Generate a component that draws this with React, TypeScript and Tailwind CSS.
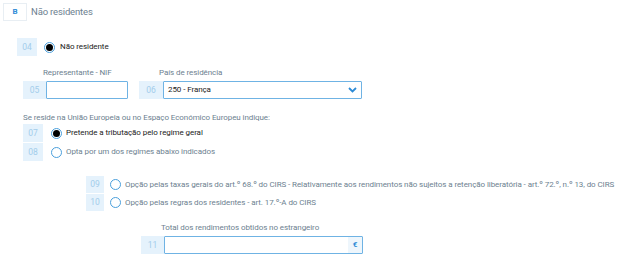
import React from "react";

const font = { fontFamily: "Roboto, 'Liberation Sans', sans-serif" };

function Num({ n, w = "w-[20px]", h = "h-[18px]" }: { n: string; w?: string; h?: string }) {
  return (
    <div className={`${w} ${h} shrink-0 bg-[#e5f2fc] text-[#a3cdeb] text-[8.5px] flex items-center justify-center`}>
      {n}
    </div>
  );
}

function Radio({ checked }: { checked?: boolean }) {
  return (
    <div className="w-[11px] h-[11px] rounded-full border border-[#4a9fdc] bg-white flex items-center justify-center shrink-0">
      {checked && <div className="w-[7px] h-[7px] rounded-full bg-black" />}
    </div>
  );
}

export default function App() {
  return (
    <div className="w-[623px] h-[257px] bg-white relative overflow-hidden tracking-[-0.08px]" style={font}>
      {/* header */}
      <div className="flex items-center pt-[3px] pl-[3px]">
        <div className="w-[24px] h-[18px] border border-[#e8eef3] flex items-center justify-center text-[8px] font-bold text-[#2d8bd6]">
          B
        </div>
        <div className="ml-[4px] text-[9.5px] text-[#6d7f90] tracking-[-0.15px]">Não residentes</div>
      </div>

      {/* 04 */}
      <div className="flex items-center mt-[17px] ml-[17px] h-[18px]">
        <Num n="04" />
        <div className="ml-[7px]"><Radio checked /></div>
        <div className="ml-[5px] text-[8px] text-[#222]">Não residente</div>
      </div>

      {/* 05 / 06 */}
      <div className="flex mt-[11px]">
        <div className="ml-[23px] flex flex-col">
          <div className="ml-[20px] text-[8px] text-[#6d7f90] h-[12px] leading-[12px]">Representante - NIF</div>
          <div className="flex mt-[2px]">
            <Num n="05" w="w-[23px]" />
            <div className="w-[82px] h-[18px] border border-[#6fb3e4] rounded-[1px] bg-white" />
          </div>
        </div>
        <div className="ml-[11px] flex flex-col">
          <div className="ml-[20px] text-[8px] text-[#6d7f90] h-[12px] leading-[12px]">País de residência</div>
          <div className="flex mt-[2px]">
            <Num n="06" w="w-[24px]" />
            <div className="w-[199px] h-[18px] border border-[#6fb3e4] rounded-[1px] bg-white flex items-center justify-between pl-[4px] pr-[4px]">
              <span className="text-[8px] text-[#222]">250 - França</span>
              <svg width="9" height="6" viewBox="0 0 9 6">
                <path d="M1 1 L4.5 4.5 L8 1" stroke="#2d8bd6" strokeWidth="1.8" fill="none" />
              </svg>
            </div>
          </div>
        </div>
      </div>

      {/* question */}
      <div className="ml-[23px] mt-[13px] text-[8px] text-[#6d7f90] h-[12px] leading-[12px]">
        Se reside na União Europeia ou no Espaço Económico Europeu indique:
      </div>
      <div className="ml-[23px] flex flex-col gap-[1px]">
        <div className="flex items-center">
          <Num n="07" />
          <div className="ml-[8px]"><Radio checked /></div>
          <div className="ml-[4px] text-[8px] text-[#222]">Pretende a tributação pelo regime geral</div>
        </div>
        <div className="flex items-center">
          <Num n="08" />
          <div className="ml-[8px]"><Radio /></div>
          <div className="ml-[4px] text-[8px] text-[#6d7f90]">Opta por um dos regimes abaixo indicados</div>
        </div>
      </div>

      <div className="ml-[86px] mt-[15px] flex flex-col gap-[1px]">
        <div className="flex items-center">
          <Num n="09" w="w-[18px]" h="h-[17px]" />
          <div className="ml-[6px]"><Radio /></div>
          <div className="ml-[4px] text-[8px] text-[#6d7f90] whitespace-nowrap">
            Opção pelas taxas gerais do art.º 68.º do CIRS - Relativamente aos rendimentos não sujeitos a retenção liberatória - art.º 72.º, n.º 13, do CIRS
          </div>
        </div>
        <div className="flex items-center">
          <Num n="10" w="w-[18px]" h="h-[17px]" />
          <div className="ml-[6px]"><Radio /></div>
          <div className="ml-[4px] text-[8px] text-[#6d7f90]">Opção pelas regras dos residentes - art. 17.º-A do CIRS</div>
        </div>
      </div>

      <div className="ml-[141px] mt-[11px] flex flex-col">
        <div className="ml-[20px] text-[8px] text-[#6d7f90] h-[12px] leading-[12px]">Total dos rendimentos obtidos no estrangeiro</div>
        <div className="flex mt-[2px]">
          <Num n="11" w="w-[23px]" />
          <div className="w-[199px] h-[18px] border border-[#6fb3e4] rounded-[1px] bg-white flex items-center justify-end">
            <div className="w-[14px] h-full bg-[#eef6fc] flex items-center justify-center text-[8px] font-bold text-[#2d8bd6]">€</div>
          </div>
        </div>
      </div>
    </div>
  );
}
